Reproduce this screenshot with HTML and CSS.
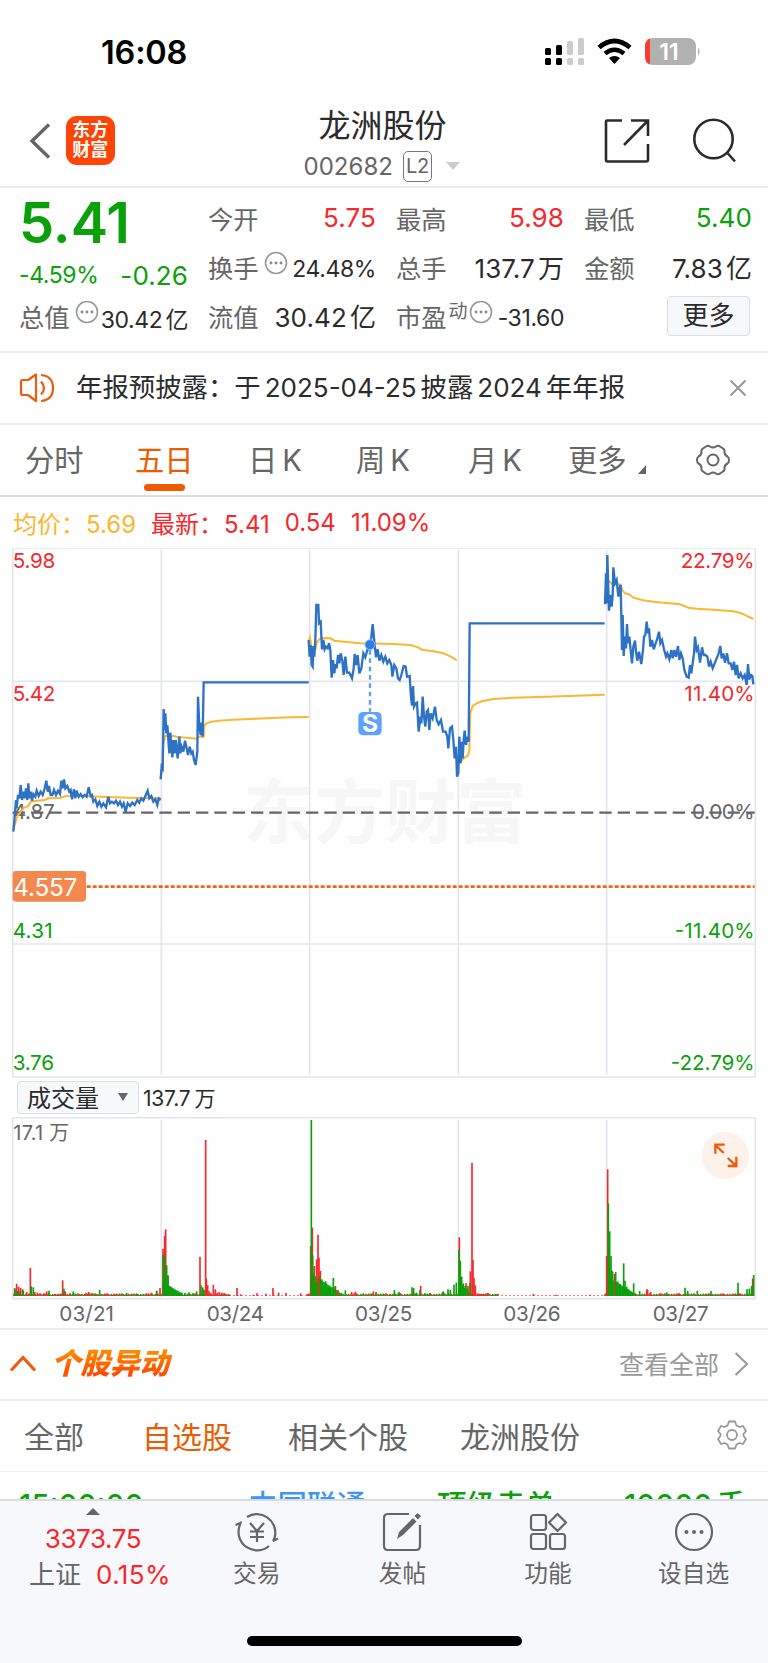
FILE: index.html
```
<!DOCTYPE html>
<html lang="zh-CN">
<head>
    <meta charset="UTF-8">
    <meta name="viewport" content="width=device-width, initial-scale=1.0">
    <title>龙洲股份 002682</title>
    <link rel="stylesheet" href="styles.css">
</head>
<body>

<div class="phone">
    <div class="status-bar">
        <span class="clock">16:08</span>
        <svg class="status-icons" width="156" height="28" viewBox="0 0 156 28">
            <g fill="#000">
                <rect x="0" y="10" width="6" height="7" rx="1.5"/><rect x="11" y="7" width="6" height="10" rx="1.5"/>
                <rect x="0" y="20" width="6" height="7" rx="1.5"/><rect x="11" y="20" width="6" height="7" rx="1.5"/>
            </g>
            <g fill="#ccc">
                <rect x="22" y="3" width="6" height="14" rx="1.5"/><rect x="33" y="0" width="6" height="17" rx="1.5"/>
                <rect x="22" y="20" width="6" height="7" rx="1.5"/><rect x="33" y="20" width="6" height="7" rx="1.5"/>
            </g>
            <g fill="none" stroke="#000" stroke-width="4.6">
                <path d="M54 9.5 Q69.500 -3.500 85 9.500"/>
                <path d="M60 15.500 Q69.500 8 79 15.500"/>
            </g>
            <path d="M64 20 Q69.500 16 75 20 L69.500 26 Z"/>
            <rect x="100" y="0" width="51" height="27" rx="8" fill="#b1b1b1"/>
            <path d="M105 0.500 V26.500 Q100 25 100 18 V9 Q100 2 105 0.500Z" fill="#ff3b30"/>
            <path d="M153 9.500 Q156 13.500 153 17.500Z" fill="#b1b1b1"/>
            <text class="battery-text" x="124" y="22" text-anchor="middle">11</text>
        </svg>
    </div>

    <div class="nav">
        <svg class="back" width="22" height="36" viewBox="0 0 22 36"><path d="M20 1.500 L3 18 L20 34.500" fill="none" stroke="#666" stroke-width="3.4"/></svg>
        <div class="logo">东方<br>财富</div>
        <div class="stock">
            <h1>龙洲股份</h1>
            <div class="code"><span>002682</span><span class="level">L2</span><i class="caret"></i></div>
        </div>
        <svg class="share" width="46" height="46" viewBox="0 0 46 46" fill="none" stroke="#2b2b2b" stroke-width="2.6">
            <path d="M18 2.500 H3 Q2 2.500 2 3.500 V42 Q2 43.500 3.500 43.500 H42 Q44 43.500 44 42 V26"/>
            <path d="M27 2.500 H44 V18 M43.500 3 L20 27"/>
        </svg>
        <svg class="search" width="46" height="46" viewBox="0 0 46 46" fill="none" stroke="#2b2b2b" stroke-width="2.6">
            <circle cx="21.500" cy="21" r="19.200"/><path d="M35 34.500 L43 43.500"/>
        </svg>
    </div>

    <div class="quote">
        <div class="price">5.41</div>
        <div class="cell"><label>今开</label><b class="red">5.75</b></div>
        <div class="cell"><label>最高</label><b class="red">5.98</b></div>
        <div class="cell"><label>最低</label><b class="green">5.40</b></div>

        <div class="cell change"><b class="green small">-4.59%</b><b class="green">-0.26</b></div>
        <div class="cell"><label>换手</label><svg class="tip" width="24" height="24"><use href="#tip"/></svg><b class="small low">24.48%</b></div>
        <div class="cell"><label>总手</label><b>137.7<span class="unit">万</span></b></div>
        <div class="cell"><label>金额</label><b>7.83<span class="unit">亿</span></b></div>

        <div class="cell"><label>总值</label><svg class="tip" width="24" height="24"><use href="#tip"/></svg><b class="small low">30.42<span class="unit">亿</span></b></div>
        <div class="cell"><label>流值</label><b>30.42<span class="unit">亿</span></b></div>
        <div class="cell"><label>市盈<sup>动</sup></label><svg class="tip tight" width="24" height="24"><use href="#tip"/></svg><b class="small low">-31.60</b></div>
        <div class="cell"><button class="more">更多</button></div>
    </div>

    <div class="notice">
        <svg width="36" height="30" viewBox="0 0 36 30" fill="none" stroke="#f05a0a" stroke-width="2.2" stroke-linejoin="round">
            <path d="M17 1.500 L9 7 H3.500 Q2 7 2 9 V20 Q2 22 3.500 22 H9 L17 28 Z"/>
            <path d="M22 8.500 Q28 15 22 21.500 M22 2 Q34 3 34 15 Q34 27 22 28"/>
        </svg>
        <p>年报预披露：<span>于</span><span class="num">2025-04-25</span>披露<span class="num">2024</span>年年报</p>
        <svg class="close" width="18" height="18" viewBox="0 0 18 18"><path d="M1.500 1.500 L16.500 16.500 M16.500 1.500 L1.500 16.500" stroke="#999" stroke-width="2"/></svg>
    </div>

    <div class="tabs">
        <span>分时</span>
        <span class="active">五日</span>
        <span>日<em>K</em></span>
        <span>周<em>K</em></span>
        <span>月<em>K</em></span>
        <span>更多<i class="corner"></i></span>
        <svg width="36" height="32" viewBox="0 0 36 32" fill="none" stroke="#666" stroke-width="2" stroke-linejoin="round">
            <path d="M11 2.500 Q13 1 15 2.500 Q18 4.500 21 2.500 Q23 1 25 2.500 L28 4.500 Q30 5.500 29.500 8 Q29.500 11 32.500 12.500 Q34 13.500 34 16 Q34 18.500 32.500 19.500 Q29.500 21 29.500 24 Q30 26.500 28 27.500 L25 29.500 Q23 31 21 29.500 Q18 27.500 15 29.500 Q13 31 11 29.500 L8 27.500 Q6 26.500 6.500 24 Q6.500 21 3.500 19.500 Q2 18.500 2 16 Q2 13.500 3.500 12.500 Q6.500 11 6.500 8 Q6 5.500 8 4.500 Z"/>
            <circle cx="18" cy="16" r="5.500"/>
        </svg>
    </div>

    <div class="legend">
        <span class="avg">均价：<b>5.69</b></span>
        <span class="last">最新：<b>5.41</b></span>
        <span class="last">0.54</span>
        <span class="last">11.09%</span>
    </div>

    <svg class="price-chart" width="768" height="537" viewBox="0 24 2304 1611">
        <text class="watermark" x="730" y="894" textLength="850">东方财富</text>
        <g fill="none" stroke="#e3e6ee" stroke-width="5">
            <path d="M38 24 H2266 V1611 H38 Z"/>
            <path d="M38 424 H2266 M38 1212 H2266" />
            <path d="M484 30 V1604 M929 30 V1604 M1375 30 V1604 M1820 30 V1604"/>
        </g>
        <g class="scale">
            <text class="up" x="38" y="84" textLength="128">5.98</text>
            <text class="up" x="38" y="482" textLength="128">5.42</text>
            <text class="flat" x="38" y="837" textLength="126">4.87</text>
            <text class="down" x="38" y="1193" textLength="120">4.31</text>
            <text class="down" x="38" y="1590" textLength="124">3.76</text>
            <text class="up" x="2042" y="84" textLength="222">22.79%</text>
            <text class="up" x="2053" y="482" textLength="211">11.40%</text>
            <text class="flat" x="2076" y="837" textLength="188">0.00%</text>
            <text class="down" x="2024" y="1193" textLength="240">-11.40%</text>
            <text class="down" x="2012" y="1590" textLength="252">-22.79%</text>
        </g>
        <path d="M38 818 H2264" stroke="#666" stroke-width="7" stroke-dasharray="37 18" fill="none"/>

        <g class="avg-line">
            <polyline points="40,870 46,848 52,830 62,815 72,803 84,799 92,785 110,782 135,780 145,775 180,774 195,769 240,767 300,770 380,773 482,775"/>
            <polyline points="482,715 487,680 490,610 496,588 515,587 530,590 590,596 598,590 611,590 612,560 618,551 635,545 655,542 700,539 800,535 870,532 926,531"/>
            <polyline points="927,300 930,292 934,318 938,335 946,330 950,308 960,296 975,294 992,295 1003,302 1040,306 1080,310 1180,312 1230,315 1255,322 1265,329 1295,333 1325,338 1345,346 1360,354 1370,361"/>
            <polyline points="1385,662 1395,652 1404,646 1408,630 1411,520 1418,498 1430,490 1445,484 1480,477 1540,473 1640,470 1814,464"/>
            <polyline points="1826,122 1836,132 1850,132 1862,134 1867,150 1875,160 1888,163 1900,173 1930,181 1960,185 2040,193 2065,203 2090,206 2140,209 2200,214 2225,220 2245,230 2260,237"/>
        </g>
        <g class="price-line">
            <polyline points="40,875 44,830 48,780 50,805 54,765 58,775 62,735 66,780 70,755 74,775 78,745 82,780 85,730 88,775 92,755 96,782 100,762 106,770 110,752 116,768 122,755 128,765 134,745 139,722 143,755 147,738 152,765 157,765 162,750 168,765 174,752 180,762 184,722 188,745 192,718 196,745 202,738 208,755 212,750 216,778 222,748 226,775 230,752 236,770 242,762 248,772 254,765 260,770 266,742 272,768 276,765 280,785 286,778 292,798 298,785 304,800 310,790 318,802 325,770 330,790 336,785 342,790 348,782 354,795 360,785 366,800 371,790 377,815 383,790 390,798 397,788 404,795 412,780 418,788 424,775 430,782 436,768 443,752 448,775 454,768 460,785 466,778 472,795 476,775 482,780"/>
            <polyline points="482,718 485,680 488,685 491,507 494,570 496,520 499,580 502,555 505,600 508,640 511,578 514,620 517,652 520,600 524,640 527,600 530,625 533,655 538,590 541,640 545,620 550,635 555,602 560,625 564,645 569,620 574,640 578,635 582,660 587,675 592,635 594,470 598,560 602,585 605,548 608,590 611,427 926,427"/>
            <polyline points="926,300 929,350 932,315 935,375 938,380 940,318 943,350 946,300 949,195 955,195 957,250 962,245 966,328 970,300 974,328 978,320 983,325 987,310 991,330 995,413 999,360 1003,400 1006,372 1010,385 1014,345 1018,370 1022,340 1027,362 1031,405 1036,350 1041,398 1048,398 1056,415 1061,385 1064,342 1068,375 1073,345 1078,400 1084,385 1090,340 1096,352 1102,330 1108,325 1113,300 1118,252 1123,305 1128,352 1133,328 1138,362 1144,345 1150,365 1156,350 1162,370 1168,360 1174,375 1177,410 1183,375 1189,385 1194,415 1199,420 1204,405 1211,378 1217,380 1221,410 1229,408 1233,470 1236,497 1239,438 1242,500 1247,490 1251,488 1256,575 1261,530 1264,550 1268,470 1272,530 1276,560 1280,515 1284,510 1288,570 1292,520 1298,535 1305,500 1310,540 1316,553 1323,540 1329,575 1337,575 1342,590 1345,625 1350,565 1356,560 1360,600 1364,655 1368,620 1371,710 1375,700 1378,590 1382,670 1384,605 1388,655 1391,600 1394,572 1398,615 1402,590 1406,605 1409,250 1814,250"/>
            <polyline points="1815,193 1818,100 1820,190 1822,45 1825,150 1827,212 1831,165 1835,200 1838,165 1840,82 1845,130 1850,120 1855,170 1860,140 1862,135 1866,330 1868,225 1871,348 1875,290 1878,325 1881,252 1884,310 1888,290 1892,330 1896,370 1900,320 1905,302 1908,335 1912,362 1917,335 1924,372 1929,330 1932,290 1936,285 1940,245 1944,280 1947,265 1951,320 1956,300 1961,328 1967,310 1972,295 1977,275 1981,310 1986,300 1992,328 1998,350 2002,340 2008,358 2014,330 2018,355 2023,330 2028,350 2034,318 2038,360 2043,340 2048,355 2053,390 2060,410 2066,413 2070,375 2074,400 2078,370 2082,340 2085,290 2090,330 2094,322 2100,368 2106,322 2111,345 2116,345 2122,350 2127,380 2132,365 2138,385 2144,370 2150,355 2156,340 2161,318 2165,355 2170,340 2175,368 2181,340 2186,370 2192,370 2197,390 2202,365 2207,405 2211,375 2216,415 2222,400 2228,415 2234,405 2240,435 2244,372 2248,418 2253,405 2257,408 2260,433"/>
        </g>

        <path d="M1110 330 V515" stroke="#5c9efa" stroke-width="7" stroke-dasharray="14 11"/>
        <circle cx="1110" cy="314" r="15" fill="#2f7de9" stroke="#8bbcff" stroke-width="3"/>
        <rect x="1075" y="516" width="70" height="70" rx="14" fill="#60a2fb"/>
        <text class="sell" x="1110" y="577" text-anchor="middle">S</text>

        <path d="M44 1040 H2264" stroke="#f0661c" stroke-width="8" stroke-dasharray="12 6"/>
        <rect x="38" y="993" width="220" height="92" rx="10" fill="#f4894f"/>
        <text class="cost" x="40" y="1067" textLength="192">4.557</text>
    </svg>

    <div class="indicator">
        <button class="picker">成交量<i></i></button>
        <span>137.7<span class="unit">万</span></span>
    </div>

    <svg class="volume-chart" width="768" height="211" viewBox="0 21 2304 633">
        <g fill="none" stroke="#e3e6ee" stroke-width="5">
            <path d="M38 23 H2266 V566 H38 Z"/>
            <path d="M484 30 V562 M1375 30 V562 M1820 30 V562"/>
        </g>
        <g id="bars"></g>
        <text class="vol-max" x="40" y="90" textLength="168">17.1 万</text>
        <circle cx="2176" cy="137" r="71" fill="#fdf1eb"/>
        <path d="M2146 131 V104 H2174 M2147 106 L2171 129 M2183 168 H2209 V140 M2208 167 L2183 144" fill="none" stroke="#f05a0a" stroke-width="7"/>
        <g class="dates">
            <text x="260" y="633" textLength="164">03/21</text>
            <text x="706" y="633" textLength="172">03/24</text>
            <text x="1151" y="633" textLength="172">03/25</text>
            <text x="1596" y="633" textLength="172">03/26</text>
            <text x="2042" y="633" textLength="168">03/27</text>
        </g>
    </svg>

    <div class="section-head">
        <svg width="26" height="17" viewBox="0 0 26 17"><path d="M1 15.500 L13 2.500 L25 15.500" fill="none" stroke="#f05a0a" stroke-width="3"/></svg>
        <h2>个股异动</h2>
        <span>查看全部</span>
        <svg width="15" height="24" viewBox="0 0 15 24"><path d="M1.500 1 L13 12 L1.500 23" fill="none" stroke="#999" stroke-width="2"/></svg>
    </div>

    <div class="filters">
        <span>全部</span>
        <span class="active">自选股</span>
        <span>相关个股</span>
        <span>龙洲股份</span>
        <svg width="30" height="30" viewBox="0 0 30 30" fill="none" stroke="#999" stroke-width="1.800" stroke-linejoin="round">
            <path d="M12 1.500 H18 L19.500 5.500 L22.500 7 L26 6 L29 11 L26.500 14 V16 L29 19 L26 24 L22.500 23 L19.500 24.500 L18 28.500 H12 L10.500 24.500 L7.500 23 L4 24 L1 19 L3.500 16 V14 L1 11 L4 6 L7.500 7 L10.500 5.500 Z"/>
            <circle cx="15" cy="15" r="5"/>
        </svg>
    </div>

    <div class="feed">
        <span class="green">15:00:00</span>
        <span class="blue">中国联通</span>
        <span class="green">顶级卖单</span>
        <span class="green">10000<span class="unit">手</span></span>
    </div>

    <div class="bottom-bar">
        <div class="index">
            <i></i>
            <div class="points">3373.75</div>
            <div><span>上证</span><b>0.15%</b></div>
        </div>
        <div class="item">
            <svg width="44" height="40" viewBox="0 0 44 40" fill="none" stroke="#666" stroke-width="2.2">
                <path d="M12 5 A18.500 18.500 0 0 1 40 24 Q39.500 27 38 29 L43 26.500"/>
                <path d="M34 34 A18.500 18.500 0 0 1 4.500 14 L5.500 11 L0.500 13"/>
                <path d="M15 11 L22 19 L29 11 M22 19 V30 M15 19.500 H29 M15 25 H29"/>
            </svg>
            <span>交易</span>
        </div>
        <div class="item">
            <svg width="44" height="40" viewBox="0 0 44 40" fill="none" stroke="#666" stroke-width="2.200">
                <path d="M29 2 H8 Q4 2 4 6 V34 Q4 38 8 38 H36 Q40 38 40 34 V13"/>
                <path d="M17 27 L19 20 L33 6 L36.500 9.500 L23 23 Z M34.500 4 L37.500 1 L41 4 L38 7.500 Z" fill="#666" stroke="none"/>
            </svg>
            <span>发帖</span>
        </div>
        <div class="item">
            <svg width="44" height="40" viewBox="0 0 44 40" fill="none" stroke="#666" stroke-width="2.200" stroke-linejoin="round">
                <rect x="5" y="3" width="15" height="15" rx="2.500"/><rect x="5" y="22" width="15" height="15" rx="2.500"/>
                <rect x="24" y="22" width="15" height="15" rx="2.500"/><path d="M31.500 2 L40 10.500 L31.500 19 L23 10.500 Z"/>
            </svg>
            <span>功能</span>
        </div>
        <div class="item">
            <svg width="44" height="40" viewBox="0 0 44 40">
                <circle cx="22" cy="20" r="18" fill="none" stroke="#666" stroke-width="2.200"/>
                <g fill="#666"><circle cx="14.500" cy="20" r="2"/><circle cx="22" cy="20" r="2"/><circle cx="29.500" cy="20" r="2"/></g>
            </svg>
            <span>设自选</span>
        </div>
        <div class="home"></div>
    </div>
</div>

<svg width="0" height="0" class="defs">
    <symbol id="tip" viewBox="0 0 24 24">
        <circle cx="12" cy="12" r="10.500" fill="none" stroke="#999" stroke-width="1.600"/>
        <g fill="#888"><circle cx="7" cy="12" r="1.400"/><circle cx="12" cy="12" r="1.400"/><circle cx="17" cy="12" r="1.400"/></g>
    </symbol>
</svg>

<script>
// volume bars: [x, height], baseline at 558
const base = 558;
const red = [
    [44,24],[50,36],[56,28],[62,24],[68,20],[80,12],[91,84],[104,12],[112,10],[120,8],[132,8],[140,14],[165,6],[175,6],[188,47],[196,14],[210,8],[240,5],[258,10],[266,12],[275,8],[290,6],[320,7],[345,5],[370,5],[395,6],[440,8],[455,10],[470,14],[480,24],[489,142],[494,180],[497,200],[504,62],
    [600,118],[610,20],[617,468],[619,52],[623,32],[627,14],[633,8],[640,33],[646,20],[652,10],[658,12],[665,10],[672,8],[680,5],[711,24],[722,5],[760,4],[771,8],[798,7],[819,24],[836,10],[858,9],[902,8],[926,6],[932,150],
    [937,205],[943,90],[950,110],[954,184],[957,115],[961,75],[1006,30],[1014,18],[1055,12],[1066,13],[1120,14],[1170,6],[1200,8],[1262,30],[1290,8],[1330,14],[1345,10],[1378,176],[1398,38],[1404,30],[1411,74],[1416,400],[1419,108],[1422,55],[1426,32],[1432,8],[1438,7],[1446,6],[1456,6],[1463,9],[1490,5],[1600,6],[1668,4],[1770,4],
    [1820,120],[1823,380],[1836,76],[1844,66],[1940,20],[1943,19],[1952,12],[1980,8],[2000,10],[2035,8],[2130,7],[2170,6],[2200,6],[2220,8],[2258,52]
];
const green = [
    [45,20],[52,15],[60,14],[70,16],[94,29],[100,26],[147,16],[192,22],[220,14],[285,8],[299,18],[380,9],[412,6],[470,16],[490,125],[493,120],[496,60],[500,92],[504,60],[509,30],[514,26],[520,20],[526,14],[535,10],[545,10],[555,9],[567,11],[580,8],[590,14],[603,32],[608,26],[612,18],
    [934,528],[938,122],[942,70],[946,44],[951,40],[960,58],[965,50],[970,30],[977,44],[984,24],[990,20],[1000,54],[1006,28],[1036,17],[1090,8],[1128,12],[1183,18],[1197,12],[1236,26],[1241,24],[1250,10],[1260,18],[1275,8],[1290,9],[1328,12],[1344,20],[1351,18],[1362,34],[1369,40],[1377,138],[1381,106],[1385,58],[1390,38],[1396,30],[1402,22],[1410,38],
    [1825,278],[1829,194],[1833,120],[1838,72],[1847,72],[1853,44],[1860,36],[1867,26],[1871,98],[1875,46],[1880,28],[1886,20],[1892,14],[1901,38],[1919,15],[2000,10],[2055,25],[2063,15],[2092,16],[2133,15],[2214,40],[2241,20],[2248,22],[2255,30],[2261,63]
];

function bar(x, h, color) {
    return '<path d="M' + x + ' ' + base + 'v-' + h + '" stroke="' + color + '" stroke-width="5"/>';
}

let out = "";
for (let x = 42; x < 2262; x += 4) {
    // almost no trades while the price sits at the limit
    let quiet = (x > 690 && x < 922) || (x > 1494 && x < 1812);
    if (quiet && x % 3 != 0) continue;
    let h = quiet ? 2 : 3 + (x * 7 % 11) / 2;
    out += bar(x, h, quiet || x * 13 % 7 < 3 ? "#f9262a" : "#0aa00a");
}
// thick clusters after each open
[[490,34,60],[936,60,90],[1378,36,34],[1826,50,80]].forEach(function (c) {
    for (let i = 0; i < c[2]; i += 4) {
        out += bar(c[0] + i, c[1] * (1 - i / c[2]) + 6, "#0aa00a");
    }
});
red.forEach(b => out += bar(b[0], b[1], "#f9262a"));
green.forEach(b => out += bar(b[0], b[1], "#0aa00a"));
document.getElementById("bars").innerHTML = out;
</script>

</body>
</html>
```
FILE: styles.css
```
* {
    box-sizing: border-box;
}
body {
    margin: 0;
    background: #fff;
    color: #2b2b2b;
    font-family: Inter, "Noto Sans CJK SC", sans-serif;
}
h1, h2, p {
    margin: 0;
    font-weight: 400;
}
b {
    font-weight: 400;
}
i, em {
    font-style: normal;
}
svg {
    display: block;
    flex: none;
}
.phone {
    width: 768px;
    height: 1663px;
    display: flex;
    flex-direction: column;
    overflow: hidden;
}
.phone > * {
    flex: none;
}
.defs {
    position: absolute;
}
.red { color: #f9262a; }
.green { color: #0aa00a; }
.blue { color: #3f95f5; }
.unit { margin-left: 4px; }

/* status bar */
.status-bar {
    height: 104px;
    padding: 0 67px 0 101px;
    display: flex;
    align-items: center;
    justify-content: space-between;
}
.clock {
    font-size: 32.5px;
    font-weight: 600;
    color: #000;
    letter-spacing: -0.2px;
}
.battery-text {
    font-size: 23px;
    font-weight: 600;
    fill: #fff;
}

/* header */
.nav {
    height: 84px;
    display: flex;
    align-items: center;
    border-bottom: 2px solid #ededf0;
    padding: 0 30px 0 29px;
}
.back {
    margin-top: -8px;
}
.logo {
    width: 49px;
    height: 49px;
    margin: -10px 0 0 15px;
    border-radius: 11px;
    background: #ff4405;
    color: #fff;
    font-size: 18px;
    font-weight: 700;
    line-height: 20px;
    padding-top: 4px;
    text-align: center;
}
.stock {
    width: 180px;
    margin: 2px 0 0 189px;
}
.stock h1 {
    margin-left: 15px;
    font-size: 32px;
    line-height: 40px;
}
.code {
    display: flex;
    align-items: center;
    height: 41px;
    font-size: 24px;
    color: #666;
}
.level {
    width: 29px;
    height: 31px;
    margin-left: 10px;
    border: 1.5px solid #777;
    border-radius: 5px;
    font-size: 20px;
    line-height: 28px;
    text-align: center;
    letter-spacing: -0.5px;
}
.caret {
    margin-left: 14px;
    border: 7px solid transparent;
    border-top: 8px solid #ccc;
    border-bottom: 0;
}
.share {
    margin: -9px 0 0 122px;
}
.search {
    margin: -9px 0 0 42px;
}

/* quote grid */
.quote {
    height: 165px;
    padding: 5px 16px 0 19px;
    display: grid;
    grid-template-columns: 169px repeat(3, 168px);
    grid-template-rows: repeat(3, 49px);
    column-gap: 20px;
    border-bottom: 2px solid #ededf0;
}
.price {
    font-size: 56px;
    font-weight: 600;
    line-height: 61px;
    color: #0aa00a;
}
.cell {
    display: flex;
    align-items: center;
    justify-content: space-between;
    font-size: 25.3px;
    white-space: nowrap;
}
.cell label {
    color: #666;
}
.cell b {
    font-size: 26px;
    letter-spacing: 0.1px;
}
.cell .small {
    font-size: 23px;
    letter-spacing: -0.4px;
}
.cell .low {
    padding-top: 5px;
    margin-left: auto;
}
.cell .unit {
    margin-left: 3px;
}
.change {
    padding-top: 17px;
}
.tip {
    margin: -8px 0 0 5px;
}
.tip.tight {
    margin-left: 1px;
}
sup {
    font-size: 19px;
    line-height: 0;
    vertical-align: 9px;
    margin-left: 2px;
}
.more {
    width: 83px;
    height: 40px;
    margin: 0 2px 0 auto;
    border: 1.5px solid #dcdfe6;
    border-radius: 4px;
    background: #f7f8fa;
    color: #2b2b2b;
    font-family: inherit;
    font-size: 26px;
    padding: 0;
    line-height: 36px;
}

/* notice */
.notice {
    height: 72px;
    padding: 0 21px 1px 19px;
    display: flex;
    align-items: center;
    border-bottom: 2px solid #ededf0;
}
.notice p {
    margin: -4px 0 0 21px;
    font-size: 26.4px;
    white-space: nowrap;
}
.notice .num {
    margin: 0 4px;
    font-size: 26px;
}
.close {
    margin-left: auto;
}

/* period tabs */
.tabs {
    height: 72px;
    padding-left: 25px;
    display: grid;
    grid-template-columns: 110px 113px 108px 112px 100px 127px 40px;
    align-items: center;
    border-bottom: 2px solid #dcdfe4;
    font-size: 29.3px;
    color: #666;
}
.tabs span {
    position: relative;
    padding-top: 2px;
    line-height: 68px;
    white-space: nowrap;
}
.tabs em {
    margin-left: 5px;
}
.active {
    color: #ee5a00;
}
.tabs .active::after {
    content: "";
    position: absolute;
    left: 9px;
    bottom: 4px;
    width: 41px;
    height: 7px;
    border-radius: 4px;
    background: #ee5a00;
}
.corner {
    display: inline-block;
    margin-left: 11px;
    border-left: 8px solid transparent;
    border-bottom: 9px solid #666;
    vertical-align: -3px;
}

.legend {
    height: 51px;
    padding: 0 0 1px 13px;
    display: flex;
    align-items: center;
    gap: 15px;
    font-size: 24px;
}
.legend b {
    margin-left: 1px;
}
.avg { color: #fdb62f; }
.last { color: #f9262a; }

/* charts */
.watermark {
    font-size: 212px;
    font-weight: 700;
    fill: #f7f7f7;
}
.scale text {
    font-size: 62px;
}
.scale .up { fill: #f9262a; }
.scale .down { fill: #0aa00a; }
.scale .flat { fill: #666; }
.avg-line polyline {
    fill: none;
    stroke: #fdb62f;
    stroke-width: 6;
}
.price-line polyline {
    fill: none;
    stroke: #2d72c4;
    stroke-width: 7;
}
.sell {
    font-size: 74px;
    font-weight: 700;
    fill: #fff;
}
.cost {
    font-size: 73px;
    fill: #fff;
}
.indicator {
    height: 33px;
    margin-top: -4px;
    padding: 0 17px;
    display: flex;
    align-items: center;
    gap: 4px;
    font-size: 21px;
    letter-spacing: -0.2px;
}
.picker {
    width: 122px;
    height: 33px;
    display: flex;
    align-items: center;
    justify-content: space-between;
    padding: 0 10px 2px 9px;
    border: 1.5px solid #dcdfe6;
    border-radius: 4px;
    background: #f7f8fa;
    color: #2b2b2b;
    font-family: inherit;
    font-size: 24px;
}
.indicator > span {
    margin-top: -2px;
}
.picker i {
    border: 5px solid transparent;
    border-top: 8px solid #666;
    border-bottom: 0;
}
.volume-chart {
    margin-top: 3px;
}
.vol-max {
    font-size: 60px;
    fill: #666;
}
.dates text {
    font-size: 62px;
    fill: #666;
    text-anchor: middle;
}

/* stock moves */
.section-head {
    height: 73px;
    padding: 0 19px 2px 10px;
    display: flex;
    align-items: center;
    border-top: 2px solid #ededf0;
    border-bottom: 2px solid #ededf0;
}
.section-head h2 {
    margin: -2px 0 0 15px;
    padding-right: 6px;
    font-size: 29.5px;
    font-weight: 900;
    font-style: italic;
    line-height: 40px;
    background: linear-gradient(#ff8a00 20%, #ff4e00 75%);
    -webkit-background-clip: text;
    background-clip: text;
    color: transparent;
}
.section-head span {
    margin: -2px 15px 0 auto;
    font-size: 25px;
    color: #999;
}
.filters {
    height: 71px;
    padding: 0 21px 2px 24px;
    display: flex;
    align-items: center;
    border-bottom: 1.5px solid #f0f0f2;
    font-size: 30px;
    color: #666;
}
.filters span {
    margin: -1px 52px 0 0;
}
.filters span:first-child {
    margin-right: 58px;
}
.filters .active {
    color: #ee5a00;
    margin-right: 56px;
}
.filters svg {
    margin-left: auto;
}
.feed {
    height: 27px;
    padding: 12px 22px 0 19px;
    display: grid;
    grid-template-columns: 229px 189px 187px auto;
    overflow: hidden;
    font-size: 29.5px;
    font-weight: 500;
    line-height: 43px;
    white-space: nowrap;
}

/* bottom bar */
.bottom-bar {
    position: relative;
    height: 164px;
    padding-left: 20px;
    display: flex;
    background: #f7f8fb;
    border-top: 2px solid #dadce2;
    color: #666;
}
.index {
    width: 164px;
    padding: 7px 18px 0 0;
    font-size: 26px;
    text-align: center;
    white-space: nowrap;
}
.index i {
    display: block;
    width: 0;
    margin: 0 auto;
    border: 7px solid transparent;
    border-bottom: 7px solid #666;
    border-top: 0;
}
.index div {
    line-height: 36px;
}
.index .points {
    margin-top: 6px;
    color: #f9262a;
    letter-spacing: -0.4px;
}
.index div + div {
    margin: 0 -10px 0 4px;
}
.index b {
    margin-left: 15px;
    color: #f9262a;
    letter-spacing: 0.4px;
}
.item {
    width: 145.6px;
    padding-top: 11px;
    display: flex;
    flex-direction: column;
    align-items: center;
    font-size: 23.7px;
}
.item span {
    margin-top: 4px;
    line-height: 36px;
}
.home {
    position: absolute;
    left: 247px;
    top: 135px;
    width: 275px;
    height: 10px;
    border-radius: 5px;
    background: #000;
}
```
